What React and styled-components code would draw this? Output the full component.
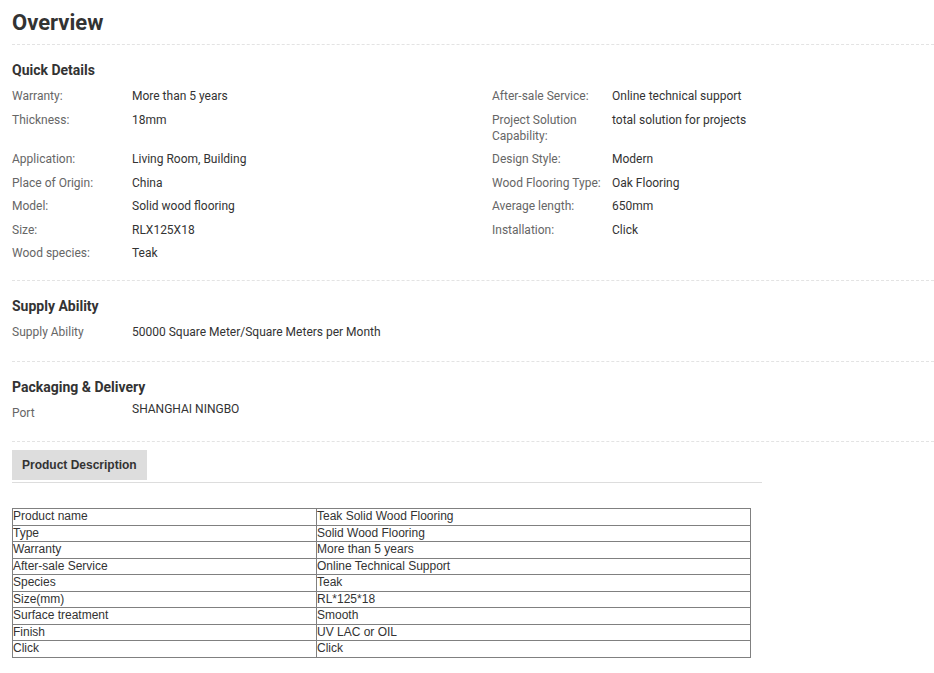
import React from "react";
import styled, { createGlobalStyle } from "styled-components";

const GlobalStyle = createGlobalStyle`
  html, body {
    margin: 0;
    padding: 0;
    background: #fff;
  }
  body {
    font-family: Roboto, "Liberation Sans", Arial, sans-serif;
    color: #333;
  }
`;

// pairs laid out left / right on the same row
const quickRows = [
  [["Warranty:", "More than 5 years"], ["After-sale Service:", "Online technical support"]],
  [["Thickness:", "18mm"], ["Project Solution Capability:", "total solution for projects"]],
  [["Application:", "Living Room, Building"], ["Design Style:", "Modern"]],
  [["Place of Origin:", "China"], ["Wood Flooring Type:", "Oak Flooring"]],
  [["Model:", "Solid wood flooring"], ["Average length:", "650mm"]],
  [["Size:", "RLX125X18"], ["Installation:", "Click"]],
  [["Wood species:", "Teak"], null],
];

const specs = [
  ["Product name", "Teak Solid Wood Flooring"],
  ["Type", "Solid Wood Flooring"],
  ["Warranty", "More than 5 years"],
  ["After-sale Service", "Online Technical Support"],
  ["Species", "Teak"],
  ["Size(mm)", "RL*125*18"],
  ["Surface treatment", "Smooth"],
  ["Finish", "UV LAC or OIL"],
  ["Click", "Click"],
];

export default function App() {
  return (
    <>
      <GlobalStyle />
      <Page>
        <Title>Overview</Title>

        <Section $bottom={15.5}>
          <SectionTitle>Quick Details</SectionTitle>
          <DetailGrid>
            {quickRows.map(([left, right], i) => (
              <React.Fragment key={i}>
                <Label>{left[0]}</Label>
                <Value>{left[1]}</Value>
                <Label>{right ? right[0] : ""}</Label>
                <Value>{right ? right[1] : ""}</Value>
              </React.Fragment>
            ))}
          </DetailGrid>
        </Section>

        <Section>
          <SectionTitle>Supply Ability</SectionTitle>
          <DetailGrid>
            <Label>Supply Ability</Label>
            <Value>50000 Square Meter/Square Meters per Month</Value>
          </DetailGrid>
        </Section>

        <Section>
          <SectionTitle>Packaging &amp; Delivery</SectionTitle>
          <DetailGrid>
            <Label>Port</Label>
            <Value $raised>SHANGHAI NINGBO</Value>
          </DetailGrid>
        </Section>

        <TabBar>
          <Tab>Product Description</Tab>
        </TabBar>

        <SpecTable>
          <tbody>
            {specs.map(([k, v], i) => (
              <tr key={i}>
                <Cell $first>{k}</Cell>
                <Cell>{v}</Cell>
              </tr>
            ))}
          </tbody>
        </SpecTable>
      </Page>
    </>
  );
}

const Page = styled.div`
  padding: 0 0 16px 12px;
`;

const Title = styled.h2`
  margin: 0;
  padding: 8px 0 6px;
  font-size: 22px;
  line-height: 30px;
  font-weight: 700;
  color: #333;
  border-bottom: 1px dashed #e3e3e3;
`;

const Section = styled.section`
  padding: 15px 0 ${(p) => p.$bottom ?? 17}px;
  border-bottom: 1px dashed #e3e3e3;
`;

const SectionTitle = styled.h3`
  margin: 0 0 4px;
  font-size: 14px;
  line-height: 20px;
  font-weight: 700;
  color: #333;
`;

const DetailGrid = styled.div`
  display: grid;
  grid-template-columns: 120px 360px 120px 1fr;
  font-size: 12px;
  line-height: 16px;
`;

const Label = styled.div`
  padding: 4px 10px 3.5px 0;
  color: #666;
`;

const Value = styled.div`
  padding: 4px 0 3.5px;
  color: #333;
  margin-top: ${(p) => (p.$raised ? "-4px" : "0")};
`;

const TabBar = styled.div`
  margin-top: 8px;
  width: 750px;
  border-bottom: 1px solid #ddd;
  padding-bottom: 2px;
`;

const Tab = styled.div`
  display: inline-block;
  background: #ddd;
  padding: 0 10px;
  height: 30px;
  line-height: 30px;
  font-family: "Liberation Sans", Arial, sans-serif;
  font-size: 12px;
  font-weight: 700;
  color: #333;
`;

const SpecTable = styled.table`
  margin-top: 25px;
  width: 739px;
  border-collapse: collapse;
  font-family: "Liberation Sans", Arial, sans-serif;
  font-size: 12px;
  color: #333;
`;

const Cell = styled.td`
  width: ${(p) => (p.$first ? "303px" : "auto")};
  border: 1px solid #808080;
  padding: 0;
  line-height: 15.5px;
  vertical-align: middle;
`;
